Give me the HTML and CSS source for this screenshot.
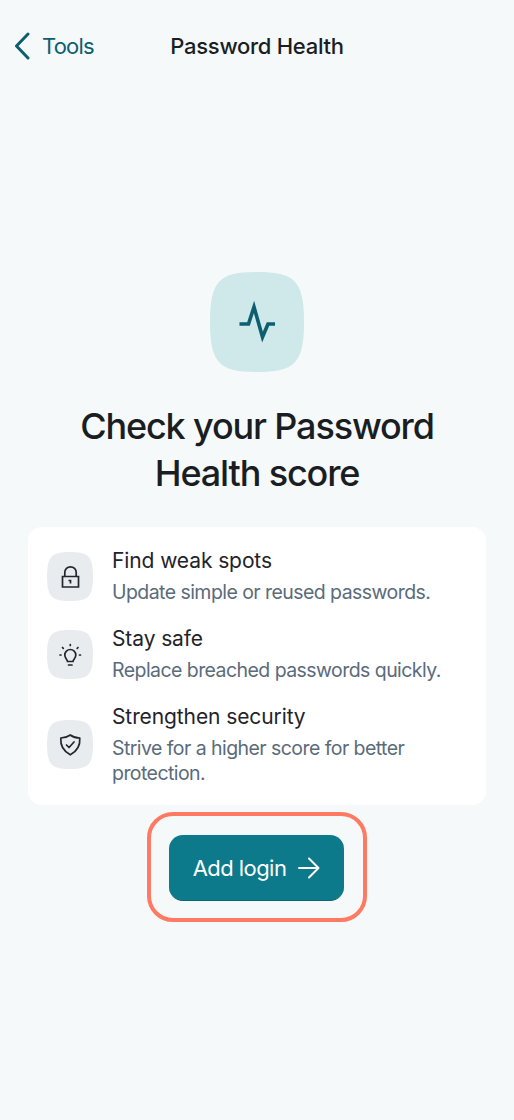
FILE: index.html
```html
<!DOCTYPE html>
<html lang="en">
<head>
<meta charset="utf-8">
<title>Password Health</title>
<link rel="stylesheet" href="styles.css">
</head>
<body>
<div class="screen">
  <header class="nav">
    <div class="back">
      <svg class="chevron" width="16" height="28" viewBox="0 0 16 28"><path d="M14 2 2.500 14 14 26" fill="none" stroke="#0d5f70" stroke-width="3" stroke-linecap="round" stroke-linejoin="round"/></svg>
      <span>Tools</span>
    </div>
    <h2 class="nav-title">Password Health</h2>
  </header>
  <main class="main">
    <svg class="hero" width="94" height="100" viewBox="0 0 94 100">
      <path d="M47 0C84 0 94 8 94 50C94 92 84 100 47 100C10 100 0 92 0 50C0 8 10 0 47 0Z" fill="#cfe8ea"/>
      <path d="M29.500 52H38.500L44 35L52.500 65L58 52H65" fill="none" stroke="#0d5f70" stroke-width="3.600"/>
    </svg>
    <h1 class="heading">Check your Password<br>Health score</h1>
    <section class="card">
      <div class="row">
        <svg class="tile" width="46" height="49" viewBox="0 0 46 49">
          <path d="M23 0C41 0 46 4 46 24.500C46 45 41 49 23 49C5 49 0 45 0 24.500C0 4 5 0 23 0Z" fill="#e9ecef"/>
          <g fill="none" stroke="#22272e" stroke-width="1.700">
            <path d="M15.500 24.500H31.500V35H15.500Z"/>
            <path d="M17.800 24.500V20.500a5.700 5.700 0 0 1 11.400 0V24.500"/>
            <path d="M21.500 28.500H23.500V31.500"/>
          </g>
        </svg>
        <div class="text">
          <h3 class="title">Find weak spots</h3>
          <p class="desc">Update simple or reused passwords.</p>
        </div>
      </div>
      <div class="row">
        <svg class="tile" width="46" height="49" viewBox="0 0 46 49">
          <path d="M23 0C41 0 46 4 46 24.500C46 45 41 49 23 49C5 49 0 45 0 24.500C0 4 5 0 23 0Z" fill="#e9ecef"/>
          <g fill="none" stroke="#22272e" stroke-width="1.700" stroke-linecap="round">
            <path d="M20.500 31.500C20.500 29.500 17.800 28.500 17.800 25a5.500 5.500 0 0 1 11 0C28.800 28.500 26 29.500 26 31.500Z"/>
            <path d="M21.500 35H25"/>
            <path d="M23.300 14.500V15.500M15.500 17.500 16.300 18.300M31 17.500 30.200 18.300M13 25H14M32.500 25H33.500"/>
          </g>
        </svg>
        <div class="text">
          <h3 class="title">Stay safe</h3>
          <p class="desc">Replace breached passwords quickly.</p>
        </div>
      </div>
      <div class="row">
        <svg class="tile" width="46" height="49" viewBox="0 0 46 49">
          <path d="M23 0C41 0 46 4 46 24.500C46 45 41 49 23 49C5 49 0 45 0 24.500C0 4 5 0 23 0Z" fill="#e9ecef"/>
          <g fill="none" stroke="#22272e" stroke-width="1.700" stroke-linecap="round" stroke-linejoin="round">
            <path d="M23.300 15C26 17 29 18 32.800 18C33.300 25 30.500 31 23.300 34.800C16 31 13.300 25 13.800 18C17.500 18 20.500 17 23.300 15Z"/>
            <path d="M19.500 25 22 27.500 27 22"/>
          </g>
        </svg>
        <div class="text">
          <h3 class="title">Strengthen security</h3>
          <p class="desc">Strive for a higher score for better protection.</p>
        </div>
      </div>
    </section>
    <div class="highlight">
      <button class="cta" type="button">
        <span>Add login</span>
        <svg width="22" height="22" viewBox="0 0 22 22"><path d="M1 11H20.500M11 1.500 20.500 11 11 20.500" fill="none" stroke="#fff" stroke-width="2" stroke-linecap="round" stroke-linejoin="round"/></svg>
      </button>
    </div>
  </main>
</div>
</body>
</html>
```

FILE: styles.css
```css
* { box-sizing: border-box; }
html, body { margin: 0; padding: 0; }
body {
  background: #f5f9fa;
  font-family: Inter, "Liberation Sans", sans-serif;
  color: #1a1e23;
}
.screen { width: 514px; height: 1120px; overflow: hidden; }
.nav {
  height: 92px;
  display: grid;
  grid-template-columns: 1fr auto 1fr;
  align-items: center;
  padding: 0 14px;
}
.back {
  display: flex;
  align-items: center;
  gap: 12px;
  font-size: 22px;
  letter-spacing: -0.8px;
  color: #0d5f70;
}
.chevron { display: block; }
.nav-title {
  grid-column: 2;
  margin: 0;
  font-size: 22px;
  font-weight: 500;
  letter-spacing: -0.27px;
  line-height: 28px;
}
.main {
  display: flex;
  flex-direction: column;
  align-items: center;
  padding-top: 180px;
}
.hero { display: block; margin-right: 1px; }
.heading {
  margin: 31px 0 0;
  font-size: 36px;
  line-height: 47px;
  font-weight: 450;
  letter-spacing: -1.14px;
  text-align: center;
}
.card {
  width: 458px;
  margin-top: 30px;
  padding: 20px 19px 19px;
  background: #fff;
  border-radius: 14px;
  display: flex;
  flex-direction: column;
  gap: 20px;
}
.row {
  display: flex;
  align-items: center;
  gap: 19px;
}
.tile { display: block; flex: none; }
.title {
  margin: 0;
  font-size: 21px;
  line-height: 28px;
  font-weight: 420;
  letter-spacing: -0.1px;
  color: #1f242b;
}
.desc {
  margin: 5px 0 0;
  font-size: 19.500px;
  line-height: 25px;
  letter-spacing: -0.56px;
  color: #5a6b7b;
}
.highlight {
  width: 220px;
  height: 110px;
  margin-top: 7px;
  border: 4px solid #ff7a63;
  border-radius: 26px;
  display: flex;
  align-items: center;
  justify-content: center;
}
.cta {
  width: 175px;
  height: 66px;
  margin: 2px 1px 0 0;
  border: 0;
  border-bottom: 1px solid #0a6778;
  border-radius: 14px;
  background: #0c7a8a;
  color: #fff;
  font: 400 22px Inter, "Liberation Sans", sans-serif;
  letter-spacing: -0.55px;
  display: flex;
  align-items: center;
  justify-content: center;
  gap: 12px;
  padding: 0;
}
```
